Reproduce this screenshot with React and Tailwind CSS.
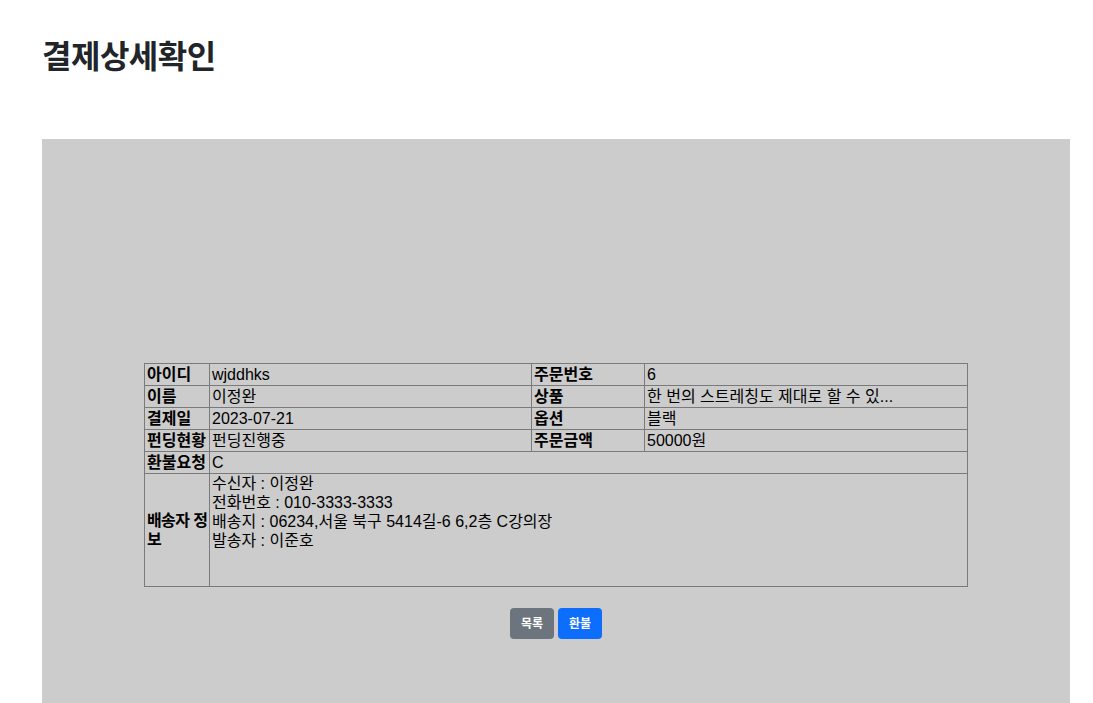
import React from 'react';

const font = { fontFamily: '"Liberation Sans", "Noto Sans CJK KR", sans-serif' };

const th = 'border border-[#7a7a7a] px-[2px] text-left font-bold align-middle';
const td = 'border border-[#7a7a7a] px-[2px] text-left font-normal align-middle';

const PaymentDetail = () => {
  return (
    <div className="min-h-screen bg-white text-[#212529] px-[42px] pt-[38px]" style={font}>
      <h1 className="text-[32px] font-bold leading-[38px] tracking-[-0.5px]">결제상세확인</h1>

      <div className="mt-[63px] w-[1028px] bg-[#cccccc] pt-[224px] pb-[200px]">
        <table className="ml-[102px] w-[823px] table-fixed border-collapse text-[16px] leading-[19px] text-black">
          <colgroup>
            <col className="w-[65px]" />
            <col className="w-[322px]" />
            <col className="w-[113px]" />
            <col className="w-[323px]" />
          </colgroup>
          <tbody>
            <tr className="h-[22px]">
              <th className={th}>아이디</th>
              <td className={td}>wjddhks</td>
              <th className={th}>주문번호</th>
              <td className={td}>6</td>
            </tr>
            <tr className="h-[22px]">
              <th className={th}>이름</th>
              <td className={td}>이정완</td>
              <th className={th}>상품</th>
              <td className={td}>한 번의 스트레칭도 제대로 할 수 있...</td>
            </tr>
            <tr className="h-[22px]">
              <th className={th}>결제일</th>
              <td className={td}>2023-07-21</td>
              <th className={th}>옵션</th>
              <td className={td}>블랙</td>
            </tr>
            <tr className="h-[22px]">
              <th className={th}>펀딩현황</th>
              <td className={td}>펀딩진행중</td>
              <th className={th}>주문금액</th>
              <td className={td}>50000원</td>
            </tr>
            <tr className="h-[22px]">
              <th className={th}>환불요청</th>
              <td className={td} colSpan={3}>C</td>
            </tr>
            <tr className="h-[113px]">
              <th className={th}>
                <span className="whitespace-nowrap tracking-[-0.6px]">배송자 정</span>
                <br />
                보
              </th>
              <td className={`${td} !align-top`} colSpan={3}>
                <div>수신자 : 이정완</div>
                <div>전화번호 : 010-3333-3333</div>
                <div>배송지 : 06234,서울 북구 5414길-6 6,2층 C강의장</div>
                <div>발송자 : 이준호</div>
              </td>
            </tr>
          </tbody>
        </table>

        <div className="mt-[21px] flex justify-center gap-[4px]">
          <button className="h-[31px] rounded-[4px] bg-[#6c757d] px-[11px] text-[12px] font-bold text-white">
            목록
          </button>
          <button className="h-[31px] rounded-[4px] bg-[#0d6efd] px-[11px] text-[12px] font-bold text-white">
            환불
          </button>
        </div>
      </div>
    </div>
  );
};

export default PaymentDetail;
